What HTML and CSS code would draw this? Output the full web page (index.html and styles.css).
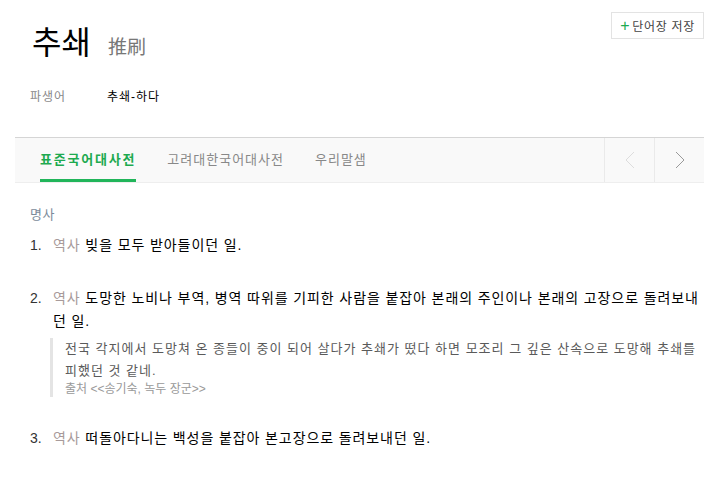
FILE: index.html
```html
<!DOCTYPE html>
<html lang="ko">
<head>
    <meta charset="UTF-8">
    <title>추쇄 : 국어사전</title>
    <link rel="stylesheet" href="styles.css">
</head>
<body>
    <div class="entry">
        <div class="entry-head">
            <div class="title-row">
                <h1 class="word">추쇄</h1>
                <span class="hanja">推刷</span>
            </div>
            <button type="button" class="btn-save"><span class="plus">+</span>단어장 저장</button>
        </div>
        <div class="derived">
            <span class="derived-label">파생어</span>
            <span class="derived-word">추쇄-하다</span>
        </div>

        <div class="dict-tabs">
            <ul class="tab-list">
                <li class="tab active">표준국어대사전</li>
                <li class="tab">고려대한국어대사전</li>
                <li class="tab">우리말샘</li>
            </ul>
            <div class="tab-nav">
                <span class="nav-btn disabled">
                    <svg width="10" height="18" viewBox="0 0 10 18"><path d="M9 1 L1 9 L9 17" fill="none" stroke="currentColor" stroke-width="1"/></svg>
                </span>
                <span class="nav-btn">
                    <svg width="10" height="18" viewBox="0 0 10 18"><path d="M1 1 L9 9 L1 17" fill="none" stroke="currentColor" stroke-width="1"/></svg>
                </span>
            </div>
        </div>

        <div class="meaning">
            <p class="pos">명사</p>
            <ol class="sense-list">
                <li class="sense">
                    <span class="num">1.</span>
                    <div class="sense-body">
                        <p class="def"><span class="field">역사</span> 빚을 모두 받아들이던 일.</p>
                    </div>
                </li>
                <li class="sense">
                    <span class="num">2.</span>
                    <div class="sense-body">
                        <p class="def"><span class="field">역사</span> 도망한 노비나 부역, 병역 따위를 기피한 사람을 붙잡아 본래의 주인이나 본래의 고장으로 돌려보내던 일.</p>
                        <blockquote class="example">
                            <p>전국 각지에서 도망쳐 온 종들이 중이 되어 살다가 추쇄가 떴다 하면 모조리 그 깊은 산속으로 도망해 추쇄를 피했던 것 같네.</p>
                            <p class="source">출처 &lt;&lt;송기숙, 녹두 장군&gt;&gt;</p>
                        </blockquote>
                    </div>
                </li>
                <li class="sense">
                    <span class="num">3.</span>
                    <div class="sense-body">
                        <p class="def"><span class="field">역사</span> 떠돌아다니는 백성을 붙잡아 본고장으로 돌려보내던 일.</p>
                    </div>
                </li>
            </ol>
        </div>
    </div>
</body>
</html>
```

FILE: styles.css
```css
body {
    margin: 0;
    padding: 0;
    background-color: #fff;
    font-family: "Liberation Sans", "Noto Sans CJK KR", sans-serif;
    color: #000;
}
p {
    margin: 0;
}
.entry {
    width: 689px;
    margin-left: 15px;
}
.entry-head {
    display: flex;
    justify-content: space-between;
    align-items: flex-start;
    padding: 12px 0 0 17px;
}
.title-row {
    display: flex;
    align-items: baseline;
    gap: 17px;
    padding-top: 12px;
}
.word {
    margin: 0;
    font-size: 32px;
    font-weight: normal;
    line-height: 38px;
}
.hanja {
    font-size: 19px;
    color: #777;
}
.btn-save {
    height: 27px;
    padding: 0 8px 0 8px;
    border: 1px solid #e3e3e3;
    background-color: #fff;
    font-family: inherit;
    font-size: 12px;
    letter-spacing: 0.7px;
    color: #444;
    cursor: pointer;
}
.btn-save .plus {
    color: #1eaa50;
    font-size: 16px;
    margin-right: 2px;
}
.derived {
    display: flex;
    padding: 26px 0 0 15px;
    font-size: 12px;
    line-height: 18px;
    letter-spacing: 1px;
}
.derived-label {
    width: 77px;
    color: #888;
}
.derived-word {
    color: #000;
}
.dict-tabs {
    display: flex;
    justify-content: space-between;
    margin-top: 31px;
    height: 44px;
    border-top: 1px solid #d5d5d5;
    border-bottom: 1px solid #eee;
    background-color: #f9f9f9;
}
.tab-list {
    display: flex;
    gap: 31px;
    list-style: none;
    margin: 0;
    padding: 0 0 0 25px;
}
.tab {
    font-size: 13px;
    line-height: 44px;
    color: #888;
    letter-spacing: 1px;
}
.tab.active {
    color: #1eaa50;
    font-weight: bold;
    letter-spacing: 1.8px;
    box-shadow: inset 0 -3px 0 #21b55a;
}
.tab-nav {
    display: flex;
}
.nav-btn {
    width: 49px;
    display: flex;
    align-items: center;
    justify-content: center;
    border-left: 1px solid #eaeaea;
    color: #999;
}
.nav-btn.disabled {
    color: #ddd;
}
.meaning {
    padding: 23px 0 0 15px;
}
.pos {
    font-size: 13px;
    line-height: 18px;
    letter-spacing: 0.5px;
    color: #7c8b9a;
}
.sense-list {
    list-style: none;
    margin: 0;
    padding: 0;
}
.sense {
    display: flex;
    margin-top: 10px;
    margin-bottom: 30px;
}
.num {
    width: 23px;
    font-size: 14px;
    line-height: 23px;
    color: #333;
}
.sense-body {
    flex: 1;
    padding-right: 3px;
}
.def {
    font-size: 14px;
    line-height: 23px;
    letter-spacing: 0.9px;
    color: #000;
}
.field {
    color: #a89a9a;
}
.example {
    margin: 5px 0 0 -3px;
    padding: 0 0 0 12px;
    border-left: 3px solid #e4e4e4;
    font-size: 13px;
    line-height: 22px;
    color: #5a5a5a;
    letter-spacing: 1px;
}
.example .source {
    font-size: 12px;
    line-height: 14px;
    padding-bottom: 1px;
    color: #999;
    letter-spacing: 0;
}
```
